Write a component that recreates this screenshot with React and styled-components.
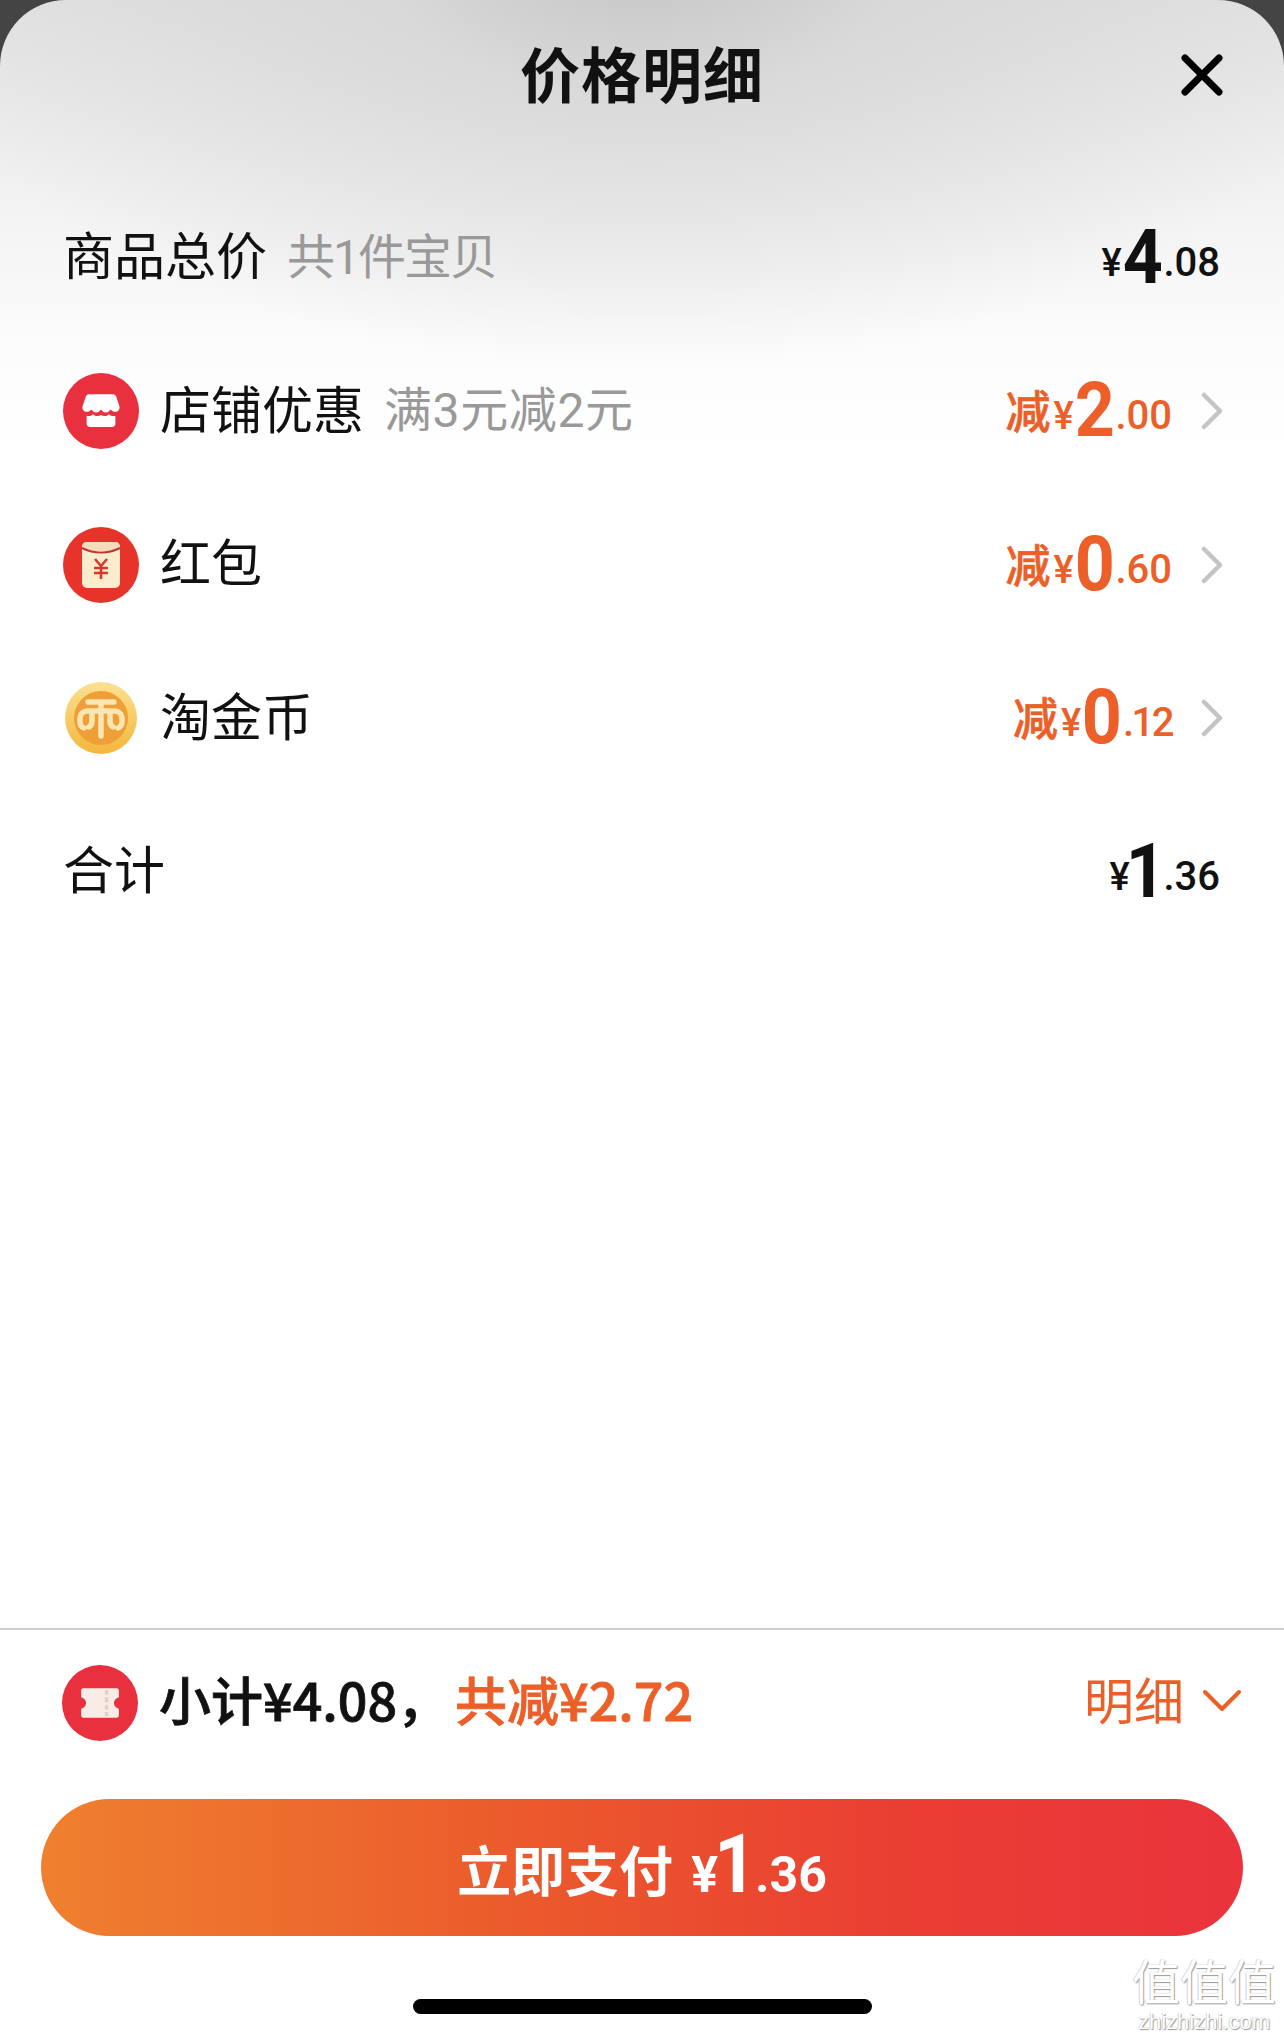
import React from "react";
import styled, { createGlobalStyle } from "styled-components";

const Global = createGlobalStyle`
  html, body { margin: 0; padding: 0; background: #444; }
  body { font-family: "Noto Sans CJK SC", Roboto, sans-serif; color: #111; }
  * { box-sizing: border-box; }
`;

const Page = styled.div`
  width: 1284px;
  height: 2038px;
  background: #444;
  overflow: hidden;
  position: relative;
`;

const Sheet = styled.div`
  height: 100%;
  display: flex;
  flex-direction: column;
  border-radius: 66px 66px 0 0;
  background:
    radial-gradient(ellipse 760px 420px at 50% -50px, #c4c4c4 0%, rgba(214,214,214,.8) 35%, rgba(255,255,255,0) 100%),
    linear-gradient(180deg, #e2e2e2 0%, #f0f0f0 170px, #fbfbfb 330px, #fff 450px);
`;

const Header = styled.header`
  height: 150px;
  flex: none;
  display: grid;
  grid-template-columns: 1fr auto 1fr;
  align-items: center;
  padding: 0 60px;
`;

const Title = styled.h1`
  grid-column: 2;
  margin: 0 0 6px;
  font-size: 60px;
  line-height: 1;
  font-weight: 700;
  letter-spacing: 1px;
  color: #111;
`;

const CloseBtn = styled.svg`
  grid-column: 3;
  justify-self: end;
  width: 44px;
  height: 44px;
`;

const List = styled.div`
  margin-top: 31px;
  flex: 1;
`;

const Row = styled.div`
  height: 153.5px;
  display: flex;
  align-items: center;
  padding: 0 ${p => (p.$arrow ? 60 : 64)}px 0 63px;
`;

const IconSlot = styled.svg`
  width: 76px;
  height: 76px;
  flex: none;
  margin-right: 21px;
`;

const Label = styled.span`
  font-size: 51px;
  line-height: 1;
  color: #111;
  padding-bottom: 8px;
`;

const Note = styled.span`
  font-size: 48px;
  line-height: 1;
  color: #999;
  margin-left: 20px;
  font-family: Roboto, "Noto Sans CJK SC", sans-serif;
  font-weight: 400;
  letter-spacing: ${p => (p.$tight ? "-2px" : "0.6px")};
`;

const Amount = styled.div`
  margin-left: auto;
  display: flex;
  align-items: baseline;
  padding-bottom: 16px;
  color: ${p => (p.$off ? "#ec5f28" : "#111")};
  font-family: Roboto, "Noto Sans CJK SC", sans-serif;
  font-weight: 500;
  line-height: 1;
`;

const Cut = styled.span`
  font-family: "Noto Sans CJK SC", sans-serif;
  font-size: 45px;
  font-weight: 500;
  -webkit-text-stroke: 0.6px #ec5f28;
  margin-right: 3px;
`;

const Yen = styled.span`
  font-size: 38px;
  font-weight: 500;
`;

const Big = styled.span`
  display: inline-block;
  font-size: 76px;
  font-weight: 700;
  transform: translateY(7px) scaleX(0.92);
  margin: 0 ${p => (p.$one ? "-4px 0 -6px" : "-1px")};
`;

const Cents = styled.span`
  font-size: 40px;
  font-weight: 500;
  letter-spacing: ${p => (p.$narrow ? "-2.5px" : "0")};
`;

const Chevron = styled.svg`
  width: 24px;
  height: 38px;
  margin-left: 28px;
  flex: none;
`;

const Footer = styled.footer`
  flex: none;
  border-top: 2px solid #cdcdcd;
  height: 410px;
  display: flex;
  flex-direction: column;
`;

const Summary = styled.div`
  height: 146px;
  padding: 0 42px 0 62px;
  display: flex;
  align-items: center;
  flex: none;
`;

const SummaryIcon = styled.svg`
  width: 76px;
  height: 76px;
  flex: none;
  margin-right: 21px;
`;

const Subtotal = styled.span`
  font-size: 52px;
  line-height: 1;
  font-weight: 500;
  -webkit-text-stroke: 0.8px #111;
  color: #111;
  padding-bottom: 8px;
`;

const Saved = styled.span`
  font-size: 52px;
  line-height: 1;
  font-weight: 500;
  -webkit-text-stroke: 0.8px #ec5f28;
  color: #ec5f28;
  margin-left: 6px;
  padding-bottom: 8px;
`;

const Detail = styled.span`
  margin-left: auto;
  font-size: 50px;
  line-height: 1;
  color: #ec5f28;
  padding-bottom: 10px;
`;

const DetailChevron = styled.svg`
  width: 40px;
  height: 24px;
  margin: 0 0 6px 18px;
  flex: none;
`;

const PayButton = styled.button`
  flex: none;
  margin: 23px 41px 0;
  height: 137px;
  border: 0;
  border-radius: 69px;
  background: linear-gradient(90deg, #ef802f 0%, #eb5a2c 40%, #ea3f33 70%, #ea333c 100%);
  color: #fff;
  display: flex;
  align-items: baseline;
  justify-content: center;
  padding: 24px 0 0;
  font-family: "Noto Sans CJK SC", sans-serif;
`;

const PayLabel = styled.span`
  font-size: 54px;
  line-height: 1;
  font-weight: 700;
  margin-right: 18px;
`;

const PayYen = styled.span`
  font-family: Roboto, sans-serif;
  font-size: 50px;
  font-weight: 700;
`;

const PayBig = styled.span`
  display: inline-block;
  font-family: Roboto, sans-serif;
  font-size: 82px;
  line-height: 1;
  font-weight: 700;
  transform: scaleX(0.9);
  margin: 0 -4px 0 -6px;
`;

const PayCents = styled.span`
  font-family: Roboto, sans-serif;
  font-size: 50px;
  font-weight: 700;
`;

const HomeBar = styled.div`
  flex: none;
  width: 459px;
  height: 15px;
  margin: 63px auto 0;
  border-radius: 8px;
  background: #000;
`;

const Watermark = styled.div`
  position: absolute;
  right: 8px;
  bottom: 5px;
  width: 144px;
  text-align: center;
  color: #fff;
  text-shadow: 1px 1px 1px #999, -0.5px 0 1px #bbb;
  line-height: 1;
`;

const WatermarkGlyphs = styled.div`
  font-size: 48px;
  font-weight: 400;
`;

const WatermarkUrl = styled.div`
  font-family: "Liberation Sans", sans-serif;
  font-size: 22px;
  margin-top: 8px;
`;

const Store = () => (
  <IconSlot viewBox="0 0 76 76">
    <circle cx="38" cy="38" r="38" fill="#e8303f" />
    <g transform="translate(38 38) scale(.8) translate(-38 -38)">
      <path d="M23 17h30c2 0 3 1 4 3l4 12c1 4-2 7-5 7-3 0-5-2-6-3-1 1-3 4-6 4s-5-3-6-4c-1 1-3 4-6 4s-5-3-6-4c-1 1-3 3-6 3-3 0-6-3-5-7l4-12c1-2 2-3 4-3z" fill="#fff" />
      <path d="M20 44c3 1 6 0 8-2 3 3 7 3 10 1 3 2 7 2 10-1 2 2 5 3 8 2v10c0 2-2 4-4 4H24c-2 0-4-2-4-4z" fill="#fff" />
    </g>
  </IconSlot>
);

const Envelope = () => (
  <IconSlot viewBox="0 0 76 76">
    <circle cx="38" cy="38" r="38" fill="#e7342a" />
    <rect x="19" y="15" width="38" height="46" rx="5" fill="#fbeccd" />
    <path d="M19 21c12 6 26 6 38 0v-1c0-3-2-5-5-5H24c-3 0-5 2-5 5z" fill="#f4dcbc" />
    <path d="M19 21c12 6 26 6 38 0" fill="none" stroke="#c5342a" strokeWidth="2" />
    <path d="M32 32l6 7 6-7M31 41h14M31 46h14M38 39v13" fill="none" stroke="#d53a2c" strokeWidth="2.6" />
  </IconSlot>
);

const Coin = () => (
  <IconSlot viewBox="0 0 76 76">
    <defs>
      <linearGradient id="coinRim" x1="0" y1="0" x2="0" y2="1">
        <stop offset="0" stopColor="#fbe191" />
        <stop offset="1" stopColor="#f4b63c" />
      </linearGradient>
    </defs>
    <circle cx="38" cy="38" r="36" fill="url(#coinRim)" />
    <circle cx="38" cy="38" r="27" fill="#ef9f37" />
    <path d="M25 22h26M38 22v34M21 48c-3-1-4-3-4-6v-3c0-5 3-8 8-8h26c5 0 8 3 8 8v3c0 3-1 5-4 6M29 33v8c0 3-1 5-3 6M47 33v8c0 3 1 5 3 6" fill="none" stroke="#fbe5b1" strokeWidth="5.5" strokeLinecap="round" />
  </IconSlot>
);

const Ticket = () => (
  <SummaryIcon viewBox="0 0 76 76">
    <circle cx="38" cy="38" r="38" fill="#e8303f" />
    <g transform="translate(38 38) scale(.82) translate(-38 -38)">
      <path d="M18 20h40c2 0 3 1 3 3v8c-4 1-6 4-6 7s2 6 6 7v8c0 2-1 3-3 3H18c-2 0-3-1-3-3v-8c4-1 6-4 6-7s-2-6-6-7v-8c0-2 1-3 3-3z" fill="#f8ece6" />
      <path d="M46 22v32" stroke="#e6cfc2" strokeWidth="4" strokeDasharray="6 3" />
    </g>
  </SummaryIcon>
);

const Arrow = () => (
  <Chevron viewBox="0 0 24 38">
    <path d="M4 3l16 16L4 35" fill="none" stroke="#c4c4c4" strokeWidth="4.5" strokeLinecap="round" strokeLinejoin="round" />
  </Chevron>
);

const Price = ({ off, big, cents, cut, one, narrow }) => (
  <Amount $off={off}>
    {cut && <Cut>减</Cut>}
    <Yen>¥</Yen>
    <Big $one={one}>{big}</Big>
    <Cents $narrow={narrow}>{cents}</Cents>
  </Amount>
);

const deals = [
  { icon: <Store />, label: "店铺优惠", note: "满3元减2元", big: "2", cents: ".00" },
  { icon: <Envelope />, label: "红包", big: "0", cents: ".60" },
  { icon: <Coin />, label: "淘金币", big: "0", cents: ".12", narrow: true },
];

export default function App() {
  return (
    <Page>
      <Global />
      <Sheet>
        <Header>
          <Title>价格明细</Title>
          <CloseBtn viewBox="0 0 44 44">
            <path d="M5 5l34 34M39 5L5 39" stroke="#000" strokeWidth="7" strokeLinecap="round" />
          </CloseBtn>
        </Header>
        <List>
          <Row>
            <Label>商品总价</Label>
            <Note $tight>共1件宝贝</Note>
            <Price big="4" cents=".08" />
          </Row>
          {deals.map(d => (
            <Row key={d.label} $arrow>
              {d.icon}
              <Label>{d.label}</Label>
              {d.note && <Note>{d.note}</Note>}
              <Price off cut big={d.big} cents={d.cents} narrow={d.narrow} />
              <Arrow />
            </Row>
          ))}
          <Row>
            <Label>合计</Label>
            <Price big="1" cents=".36" one />
          </Row>
        </List>
        <Footer>
          <Summary>
            <Ticket />
            <Subtotal>小计¥4.08，</Subtotal>
            <Saved>共减¥2.72</Saved>
            <Detail>明细</Detail>
            <DetailChevron viewBox="0 0 40 24">
              <path d="M3 4l17 17L37 4" fill="none" stroke="#ec5f28" strokeWidth="4" strokeLinecap="round" strokeLinejoin="round" />
            </DetailChevron>
          </Summary>
          <PayButton>
            <PayLabel>立即支付</PayLabel>
            <PayYen>¥</PayYen>
            <PayBig>1</PayBig>
            <PayCents>.36</PayCents>
          </PayButton>
          <HomeBar />
        </Footer>
      </Sheet>
      <Watermark>
        <WatermarkGlyphs>值值值</WatermarkGlyphs>
        <WatermarkUrl>zhizhizhi.com</WatermarkUrl>
      </Watermark>
    </Page>
  );
}
